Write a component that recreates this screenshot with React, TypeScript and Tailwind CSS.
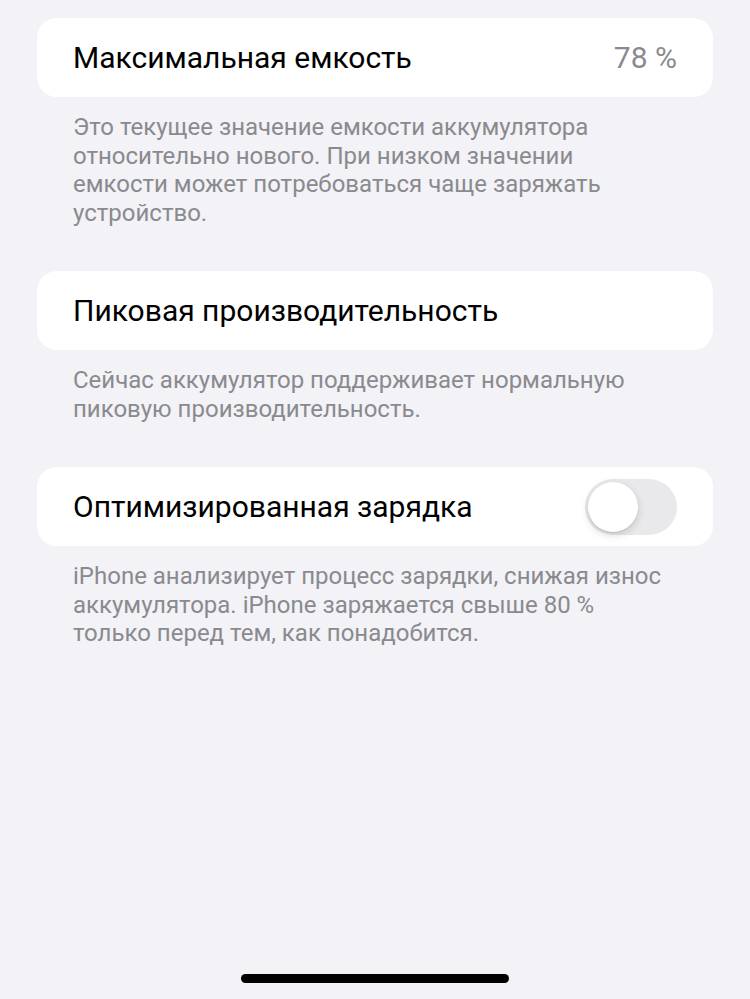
import React from 'react'

const font = { fontFamily: 'Roboto, "Noto Sans", sans-serif' }

function Card({ children }: { children: React.ReactNode }) {
  return (
    <div className="mx-[37px] h-[79px] bg-white rounded-[20px] flex items-center justify-between pl-[36px] pr-[36px]">
      {children}
    </div>
  )
}

function Footer({ lines }: { lines: string[] }) {
  return (
    <p className="mx-[73px] mt-[16px] text-[24px] leading-[28.5px] text-[#8a8a8e] whitespace-nowrap">
      {lines.map((l, i) => (
        <React.Fragment key={i}>
          {l}
          {i < lines.length - 1 && <br />}
        </React.Fragment>
      ))}
    </p>
  )
}

export default function App() {
  return (
    <div className="w-[750px] h-[999px] bg-[#f2f2f7] flex flex-col pt-[18px]" style={font}>
      <Card>
        <span className="text-[30px] text-black">Максимальная емкость</span>
        <span className="text-[30px] text-[#8a8a8e]">78 %</span>
      </Card>
      <Footer
        lines={[
          'Это текущее значение емкости аккумулятора',
          'относительно нового. При низком значении',
          'емкости может потребоваться чаще заряжать',
          'устройство.',
        ]}
      />

      <div className="mt-[44px]">
        <Card>
          <span className="text-[30px] text-black">Пиковая производительность</span>
        </Card>
      </div>
      <Footer lines={['Сейчас аккумулятор поддерживает нормальную', 'пиковую производительность.']} />

      <div className="mt-[44px]">
        <Card>
          <span className="text-[30px] text-black">Оптимизированная зарядка</span>
          <div className="w-[92px] h-[56px] rounded-full bg-[#e9e9eb] p-[3px] flex items-center">
            <div className="w-[50px] h-[50px] rounded-full bg-white shadow-[0_3px_8px_rgba(0,0,0,0.15),0_1px_1px_rgba(0,0,0,0.08)]" />
          </div>
        </Card>
      </div>
      <Footer
        lines={[
          'iPhone анализирует процесс зарядки, снижая износ',
          'аккумулятора. iPhone заряжается свыше 80 %',
          'только перед тем, как понадобится.',
        ]}
      />

      <div className="mt-auto mb-[16px] self-center w-[268px] h-[9px] rounded-full bg-black" />
    </div>
  )
}
